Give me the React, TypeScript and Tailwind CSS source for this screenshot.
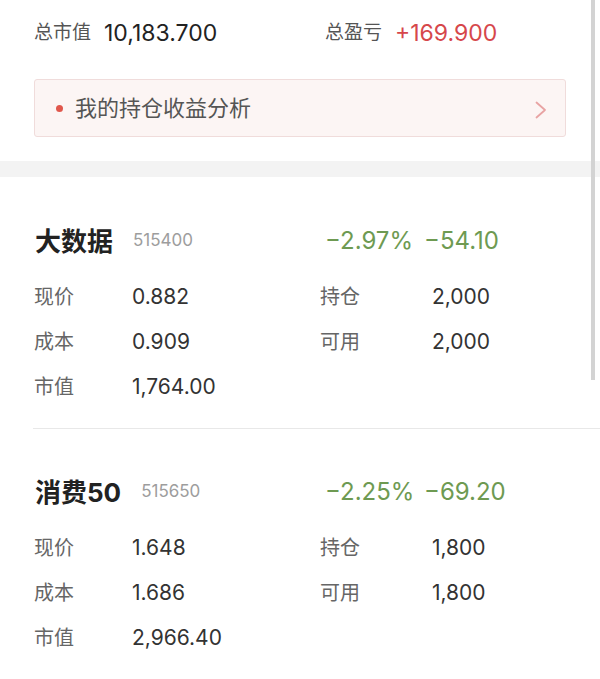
interface Holding {
  name: string;
  code: string;
  pct: string;
  amount: string;
  price: string;
  cost: string;
  value: string;
  position: string;
  available: string;
}

const holdings: Holding[] = [
  {
    name: "大数据",
    code: "515400",
    pct: "−2.97%",
    amount: "−54.10",
    price: "0.882",
    cost: "0.909",
    value: "1,764.00",
    position: "2,000",
    available: "2,000",
  },
  {
    name: "消费50",
    code: "515650",
    pct: "−2.25%",
    amount: "−69.20",
    price: "1.648",
    cost: "1.686",
    value: "2,966.40",
    position: "1,800",
    available: "1,800",
  },
];

const font = "font-['Inter','Noto_Sans_CJK_SC',sans-serif]";

function Row({ label, value, label2, value2 }: { label: string; value: string; label2?: string; value2?: string }) {
  return (
    <div className="flex h-[45px] items-center">
      <span className="w-[98px] text-[20px] text-[#666]">{label}</span>
      <span className="w-[188px] text-[21px] text-[#333]">{value}</span>
      {label2 && <span className="w-[112px] text-[20px] text-[#666]">{label2}</span>}
      {value2 && <span className="text-[21px] text-[#333]">{value2}</span>}
    </div>
  );
}

function HoldingCard({ h, first }: { h: Holding; first: boolean }) {
  return (
    <section className={first ? "pt-[44px] pb-[19px]" : "pt-[43px]"}>
      <div className="flex h-[40px] items-center px-[35px]">
        <div className="flex w-[290px] items-center gap-[20px]">
          <span className="text-[26px] font-bold text-[#222]">{h.name}</span>
          <span className="text-[17px] text-[#9d9d9d]">{h.code}</span>
        </div>
        <span className="w-[99px] text-[24px] text-[#6e9a52]">{h.pct}</span>
        <span className="text-[24px] text-[#6e9a52]">{h.amount}</span>
      </div>
      <div className="mt-[13px] px-[34px]">
        <Row label="现价" value={h.price} label2="持仓" value2={h.position} />
        <Row label="成本" value={h.cost} label2="可用" value2={h.available} />
        <Row label="市值" value={h.value} />
      </div>
    </section>
  );
}

export default function App() {
  return (
    <div className={`relative h-[679px] w-[600px] overflow-hidden bg-white ${font}`}>
      {/* Totals */}
      <div className="flex h-[66px] items-center px-[34px]">
        <div className="flex w-[291px] items-center gap-[13px]">
          <span className="text-[19px] text-[#555]">总市值</span>
          <span className="text-[23px] text-[#222]">10,183.700</span>
        </div>
        <div className="flex items-center gap-[13px]">
          <span className="text-[19px] text-[#555]">总盈亏</span>
          <span className="text-[23px] text-[#d6474b]">+169.900</span>
        </div>
      </div>

      {/* Analysis link */}
      <div className="mx-[34px] mt-[13px] flex h-[58px] items-center rounded-[3px] border border-[#f0dcdb] bg-[#fcf5f4] pl-[21px] pr-[18px]">
        <span className="h-[7px] w-[7px] rounded-full bg-[#e0574c]" />
        <span className="ml-[12px] flex-1 text-[22px] text-[#555]">我的持仓收益分析</span>
        <svg className="mt-[3px]" width="12" height="18" viewBox="0 0 12 18" fill="none" stroke="#e8a3a3" strokeWidth="1.8" strokeLinecap="round" strokeLinejoin="round">
          <polyline points="1.5,1.5 10,9 1.5,16.5" />
        </svg>
      </div>

      <div className="mt-[24px] h-[16px] bg-[#f3f3f3]" />

      <HoldingCard h={holdings[0]} first />
      <div className="ml-[33px] border-t border-[#e8e8e8]" />
      <HoldingCard h={holdings[1]} first={false} />

      {/* scroll indicator */}
      <div className="absolute right-[5px] top-0 h-[380px] w-[4px] bg-[#d3d3d3]" />
    </div>
  );
}
